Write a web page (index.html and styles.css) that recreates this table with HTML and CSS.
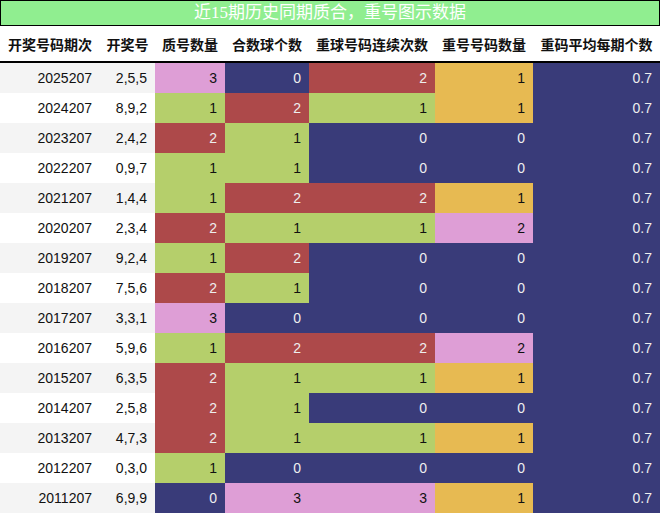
FILE: index.html
```html
<!DOCTYPE html>
<html lang="zh">
<head>
<meta charset="utf-8">
<link rel="stylesheet" href="styles.css">
</head>
<body>
<div class="title">近15期历史同期质合，重号图示数据</div>
<table class="grid">
<colgroup>
<col class="w1"><col class="w2"><col class="w3"><col class="w4"><col class="w5"><col class="w6"><col class="w7">
</colgroup>
<thead>
<tr><th>开奖号码期次</th><th>开奖号</th><th>质号数量</th><th>合数球个数</th><th>重球号码连续次数</th><th>重号号码数量</th><th>重码平均每期个数</th></tr>
</thead>
<tbody>
<tr><td>2025207</td><td>2,5,5</td><td class="plum">3</td><td class="navy">0</td><td class="red">2</td><td class="gold">1</td><td class="navy">0.7</td></tr>
<tr><td>2024207</td><td>8,9,2</td><td class="green">1</td><td class="red">2</td><td class="green">1</td><td class="gold">1</td><td class="navy">0.7</td></tr>
<tr><td>2023207</td><td>2,4,2</td><td class="red">2</td><td class="green">1</td><td class="navy">0</td><td class="navy">0</td><td class="navy">0.7</td></tr>
<tr><td>2022207</td><td>0,9,7</td><td class="green">1</td><td class="green">1</td><td class="navy">0</td><td class="navy">0</td><td class="navy">0.7</td></tr>
<tr><td>2021207</td><td>1,4,4</td><td class="green">1</td><td class="red">2</td><td class="red">2</td><td class="gold">1</td><td class="navy">0.7</td></tr>
<tr><td>2020207</td><td>2,3,4</td><td class="red">2</td><td class="green">1</td><td class="green">1</td><td class="plum">2</td><td class="navy">0.7</td></tr>
<tr><td>2019207</td><td>9,2,4</td><td class="green">1</td><td class="red">2</td><td class="navy">0</td><td class="navy">0</td><td class="navy">0.7</td></tr>
<tr><td>2018207</td><td>7,5,6</td><td class="red">2</td><td class="green">1</td><td class="navy">0</td><td class="navy">0</td><td class="navy">0.7</td></tr>
<tr><td>2017207</td><td>3,3,1</td><td class="plum">3</td><td class="navy">0</td><td class="navy">0</td><td class="navy">0</td><td class="navy">0.7</td></tr>
<tr><td>2016207</td><td>5,9,6</td><td class="green">1</td><td class="red">2</td><td class="red">2</td><td class="plum">2</td><td class="navy">0.7</td></tr>
<tr><td>2015207</td><td>6,3,5</td><td class="red">2</td><td class="green">1</td><td class="green">1</td><td class="gold">1</td><td class="navy">0.7</td></tr>
<tr><td>2014207</td><td>2,5,8</td><td class="red">2</td><td class="green">1</td><td class="navy">0</td><td class="navy">0</td><td class="navy">0.7</td></tr>
<tr><td>2013207</td><td>4,7,3</td><td class="red">2</td><td class="green">1</td><td class="green">1</td><td class="gold">1</td><td class="navy">0.7</td></tr>
<tr><td>2012207</td><td>0,3,0</td><td class="green">1</td><td class="navy">0</td><td class="navy">0</td><td class="navy">0</td><td class="navy">0.7</td></tr>
<tr><td>2011207</td><td>6,9,9</td><td class="navy">0</td><td class="plum">3</td><td class="plum">3</td><td class="gold">1</td><td class="navy">0.7</td></tr>
</tbody>
</table>
</body>
</html>
```
FILE: styles.css
```css
html, body {
  margin: 0;
  padding: 0;
  background: #ffffff;
}
.title {
  box-sizing: border-box;
  width: 660px;
  height: 26px;
  border: 1px solid #000;
  background: #90ee90;
  color: #ffffff;
  font-family: "Liberation Serif", "Noto Sans CJK SC", serif;
  font-size: 17px;
  line-height: 23px;
  text-align: center;
}
.grid {
  width: 660px;
  border-collapse: collapse;
  table-layout: fixed;
  border-spacing: 0;
  margin-top: 1px;
}
.w1 { width: 100px; }
.w2 { width: 55px; }
.w3 { width: 70px; }
.w4 { width: 84px; }
.w5 { width: 126px; }
.w6 { width: 98px; }
.w7 { width: 127px; }
.grid th {
  height: 34px;
  padding: 0;
  border-bottom: 2px solid #000;
  font-family: "Noto Sans CJK SC", sans-serif;
  font-weight: bold;
  font-size: 14px;
  color: #111;
  text-align: center;
  white-space: nowrap;
}
.grid td {
  height: 30px;
  padding: 0 8px 0 0;
  font-family: "Liberation Sans", "Noto Sans CJK SC", sans-serif;
  font-size: 14px;
  color: #111;
  text-align: right;
  white-space: nowrap;
}
.grid tbody tr:nth-child(odd) { background: #f4f4f4; }
.grid tbody tr:nth-child(even) { background: #ffffff; }
.grid td.plum { background: #de9ed6; color: #111; }
.grid td.navy { background: #393b79; color: #eeeeee; }
.grid td.red { background: #ad494a; color: #eeeeee; }
.grid td.green { background: #b5cf6b; color: #111; }
.grid td.gold { background: #e7ba52; color: #111; }
```
